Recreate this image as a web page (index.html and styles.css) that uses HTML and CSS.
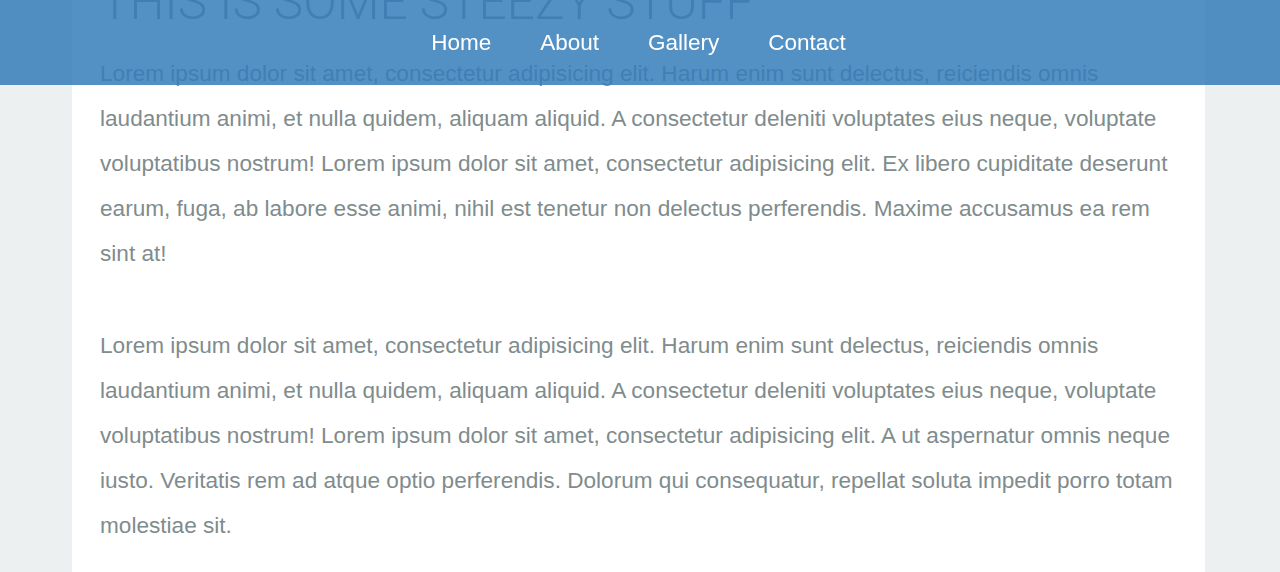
FILE: index.html
```html
<!DOCTYPE html>
<html lang="en">
<head>
<meta charset="utf-8" />
<title>Steezy Stuff</title>
<link rel="stylesheet" href="styles.css">
</head>
<body>
<div id="header">
  <ul class="nav">
    <li><a href="#">Home</a></li>
    <li><a href="#">About</a></li>
    <li><a href="#">Gallery</a></li>
    <li><a href="#">Contact</a></li>
  </ul>
</div>
<div id="wrapper">
  <h1 class="title">This is some steezy stuff</h1>
  <p>Lorem ipsum dolor sit amet, consectetur adipisicing elit. Harum enim sunt delectus, reiciendis omnis laudantium animi, et nulla quidem, aliquam aliquid. A consectetur deleniti voluptates eius neque, voluptate voluptatibus nostrum! Lorem ipsum dolor sit amet, consectetur adipisicing elit. Ex libero cupiditate deserunt earum, fuga, ab labore esse animi, nihil est tenetur non delectus perferendis. Maxime accusamus ea rem sint at!</p>
  <p>Lorem ipsum dolor sit amet, consectetur adipisicing elit. Harum enim sunt delectus, reiciendis omnis laudantium animi, et nulla quidem, aliquam aliquid. A consectetur deleniti voluptates eius neque, voluptate voluptatibus nostrum! Lorem ipsum dolor sit amet, consectetur adipisicing elit. A ut aspernatur omnis neque iusto. Veritatis rem ad atque optio perferendis. Dolorum qui consequatur, repellat soluta impedit porro totam molestiae sit.</p>
</div>
</body>
</html>
```

FILE: styles.css
```css
body { margin: 0; padding-right: 3px; background-color: #ecf0f1; font-family: "Liberation Sans", Arial, Helvetica, sans-serif; font-size: 22.6px; color: #7f8c8d; }

#header { position: fixed; top: 0; left: 0; right: 0; height: 85px; padding-right: 3px; background-color: rgba(53, 124, 186, 0.85); display: flex; align-items: center; justify-content: center; z-index: 10; }
.nav { list-style: none; margin: 0; padding: 0; display: flex; gap: 49px; }
.nav a { color: #FFFFFF; text-decoration: none; font-size: 22.5px; }

/* page is shown scrolled a little, title sits under the bar */
#wrapper { width: 1133px; box-sizing: border-box; margin: -25px auto 0; padding: 0 20px 120px 28px; background-color: #FFFFFF; }
.title { margin: 0 0 22px; font-family: Roboto, "Liberation Sans", sans-serif; font-weight: 300; font-size: 49.5px; line-height: 54px; text-transform: uppercase; color: #7f8c8d; }
#wrapper p { margin: 0 0 47px; line-height: 45px; }
```
